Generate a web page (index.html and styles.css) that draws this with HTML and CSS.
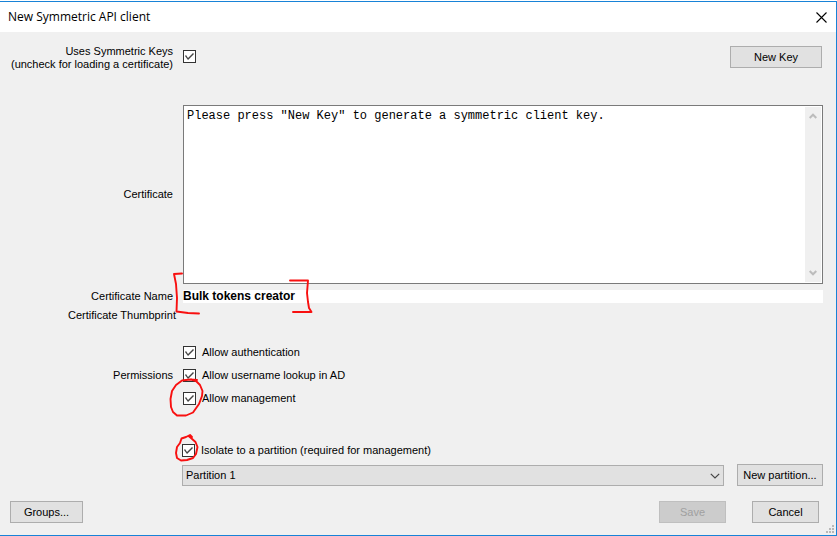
FILE: index.html
```html
<!DOCTYPE html>
<html lang="en">
<head>
<meta charset="utf-8">
<title>New Symmetric API client</title>
<link rel="stylesheet" href="styles.css">
</head>
<body>
<main class="window">
  <header class="titlebar">
    <h1>New Symmetric API client</h1>
    <button class="close" type="button" aria-label="Close">
      <svg width="11" height="11" viewBox="0 0 11 11"><path d="M.5.5l10 10M10.5.5l-10 10" fill="none" stroke="#000" stroke-width="1.1"/></svg>
    </button>
  </header>
  <form class="body">
    <div class="row keys-row">
      <label class="caption" for="symmetric">Uses Symmetric Keys<br>(uncheck for loading a certificate)</label>
      <input class="check" type="checkbox" id="symmetric" checked>
      <button class="btn new-key" type="button">New Key</button>
    </div>
    <div class="row cert-row">
      <label class="caption" for="certificate">Certificate</label>
      <div class="memo">
        <textarea id="certificate" readonly>Please press "New Key" to generate a symmetric client key.</textarea>
        <div class="scrollbar">
          <svg width="8" height="6" viewBox="0 0 8 6"><path d="M.7 5L4 1.700L7.300 5" fill="none" stroke="#bcbcbc" stroke-width="2"/></svg>
          <svg width="8" height="6" viewBox="0 0 8 6"><path d="M.7 1L4 4.300L7.300 1" fill="none" stroke="#bcbcbc" stroke-width="2"/></svg>
        </div>
      </div>
    </div>
    <div class="row name-row">
      <label class="caption" for="name">Certificate Name</label>
      <input class="name" type="text" id="name" value="Bulk tokens creator">
    </div>
    <div class="row thumb-row">
      <span class="caption">Certificate Thumbprint</span>
    </div>
    <div class="row perm-row" role="group" aria-labelledby="permissions">
      <span class="caption" id="permissions">Permissions</span>
      <div class="options">
        <label class="option"><input class="check" type="checkbox" checked>Allow authentication</label>
        <label class="option"><input class="check" type="checkbox" checked>Allow username lookup in AD</label>
        <label class="option"><input class="check" type="checkbox" checked>Allow management</label>
      </div>
    </div>
    <div class="partition">
      <label class="option"><input class="check" type="checkbox" checked>Isolate to a partition (required for management)</label>
      <div class="partition-row">
        <div class="combo">
          <select aria-label="Partition"><option>Partition 1</option></select>
          <svg width="10" height="6" viewBox="0 0 10 6"><path d="M.8.8L5 5L9.200.8" fill="none" stroke="#444" stroke-width="1.200"/></svg>
        </div>
        <button class="btn new-partition" type="button">New partition...</button>
      </div>
    </div>
    <footer class="actions">
      <button class="btn groups" type="button">Groups...</button>
      <button class="btn save" type="button" disabled>Save</button>
      <button class="btn cancel" type="button">Cancel</button>
    </footer>
  </form>
  <svg class="grip" width="8" height="8" viewBox="0 0 8 8"><path d="M6 0h2v2H6zM3 3h2v2H3zM6 3h2v2H6zM0 6h2v2H0zM3 6h2v2H3zM6 6h2v2H6z" fill="#b8b8b8"/></svg>
  <svg class="marks" width="330" height="470" viewBox="0 0 330 470" aria-hidden="true">
    <g fill="none" stroke="#f81010" stroke-width="1.900" stroke-linecap="round" stroke-linejoin="round">
      <path d="M182 273.500L174 274L176 284L177 298L176.500 311.500L188 313L199 313.500"/>
      <path d="M290 280.500H308L307 293L308 302L309 308L311.500 312L305 312H293"/>
      <path d="M197 380L190 379.500L182 380.500L176 385L172 391L170.500 399L171 407L173 412L177 415.500L186 415.500L193 412.500L199 404L202 396L202.500 391L200 385L196 381L191 379.500"/>
      <path d="M192 437L190 435L186 437L181.500 438.500L180 443L177 447L176 453L177 458L181 460.500L187 460L193 458L196 454L197.500 447L195.500 442L191 438L188.500 436"/>
    </g>
  </svg>
</main>
</body>
</html>
```

FILE: styles.css
```css
* {
  box-sizing: border-box;
}

body {
  margin: 0;
  padding-top: 1px;
  background: #fff;
  color: #000;
  font: 11px/13px "Liberation Sans", Arial, sans-serif;
}

button,
input,
select,
textarea {
  margin: 0;
  font: inherit;
  color: inherit;
}

.window {
  position: relative;
  display: flex;
  flex-direction: column;
  min-height: calc(100vh - 1px);
  border: 1px solid #1883d7;
  border-left: 0;
  background: #f0f0f0;
}

.titlebar {
  display: flex;
  align-items: center;
  justify-content: space-between;
  height: 30px;
  padding: 0 9px 0 8px;
  background: #fff;
}

.titlebar h1 {
  margin: 0;
  font: 12px/16px "Open Sans", "Noto Sans", sans-serif;
}

.close {
  display: flex;
  padding: 0;
  border: 0;
  background: none;
}

.body {
  display: flex;
  flex-direction: column;
  padding: 13px 13px 12px 0;
}

.row {
  display: flex;
  align-items: center;
  gap: 10px;
}

.caption {
  flex: none;
  width: 173px;
  text-align: right;
}

.check {
  appearance: none;
  flex: none;
  display: block;
  width: 13px;
  height: 13px;
  border: 1px solid #333;
  background: #fff;
}

.check:checked::before {
  content: "";
  display: block;
  width: 11px;
  height: 11px;
  background: #444;
  clip-path: polygon(1px 5px, 2px 4px, 4px 7px, 9px 2px, 10px 3px, 4px 9px);
}

.btn {
  flex: none;
  height: 22px;
  padding: 0;
  border: 1px solid #adadad;
  background: #e1e1e1;
}

.btn:disabled {
  border-color: #bfbfbf;
  background: #ccc;
  color: #a0a0a0;
}

.keys-row {
  align-items: flex-start;
}

.keys-row .check {
  margin-top: 5px;
}

.new-key {
  width: 92px;
  margin: 1px 1px 0 auto;
}

.cert-row {
  margin-top: 34px;
}

.memo {
  display: flex;
  flex: 1;
  height: 179px;
  padding: 1px;
  border: 1px solid #7a7a7a;
  background: #fff;
}

.memo textarea {
  flex: 1;
  padding: 2px;
  border: 0;
  outline: 0;
  resize: none;
  overflow: hidden;
  background: none;
  font: 12px/14px "Liberation Mono", "Courier New", monospace;
}

.scrollbar {
  display: flex;
  flex-direction: column;
  align-items: center;
  justify-content: space-between;
  width: 16px;
  padding: 6px 0;
  background: #f0f0f0;
}

.name-row {
  margin-top: 6px;
}

.name {
  flex: 1;
  min-width: 0;
  height: 13px;
  padding: 0;
  border: 0;
  background: #fff;
  font-size: 12px;
  font-weight: bold;
}

.thumb-row {
  margin-top: 6px;
}

.thumb-row .caption {
  width: 176px;
}

.perm-row {
  margin-top: 24px;
}

.options {
  display: flex;
  flex-direction: column;
  gap: 10px;
}

.option {
  display: flex;
  align-items: center;
  gap: 6px;
}

.partition {
  display: flex;
  flex-direction: column;
  gap: 7px;
  margin: 39px 0 0 182px;
}

.partition-row {
  display: flex;
  align-items: center;
  gap: 13px;
}

.combo {
  position: relative;
  flex: 1;
}

.combo select {
  appearance: none;
  display: block;
  width: 100%;
  height: 21px;
  padding: 0 3px;
  border: 1px solid #adadad;
  border-radius: 0;
  background: #e1e1e1;
}

.combo svg {
  position: absolute;
  top: 8px;
  right: 4px;
  pointer-events: none;
}

.new-partition {
  width: 86px;
}

.actions {
  display: flex;
  gap: 26px;
  margin: 15px 4px 0 10px;
}

.groups {
  width: 73px;
  margin-right: auto;
}

.save,
.cancel {
  width: 67px;
}

.grip {
  position: absolute;
  right: 2px;
  bottom: 2px;
}

.marks {
  position: absolute;
  top: -2px;
  left: 0;
  pointer-events: none;
}
```
